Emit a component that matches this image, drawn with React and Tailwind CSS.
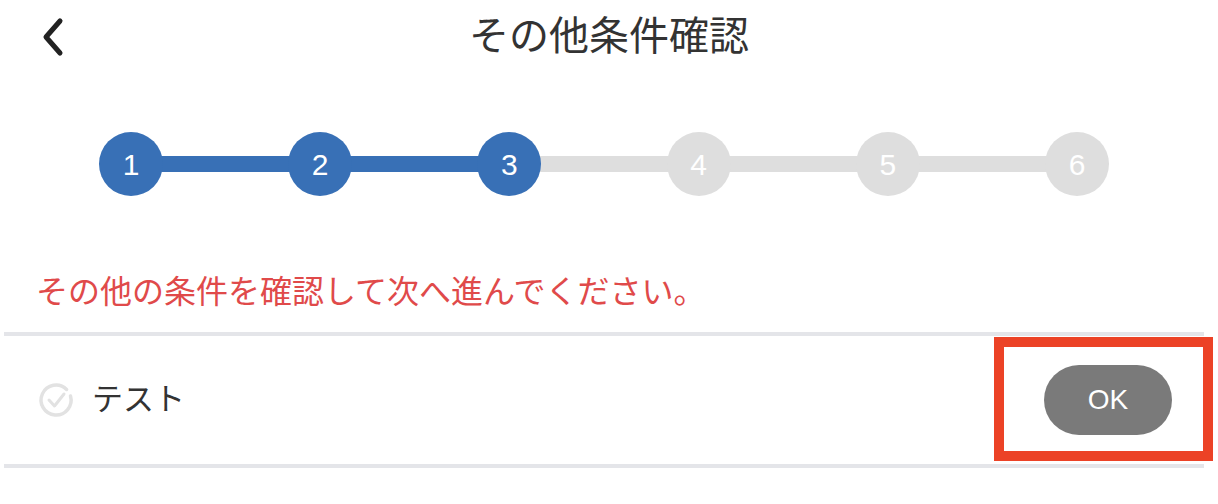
const font = { fontFamily: '"Liberation Sans", "Noto Sans CJK JP", sans-serif' };

const steps = [1, 2, 3, 4, 5, 6];

function Stepper() {
  return (
    <div className="flex items-center pl-[99px] pr-[109px] mt-[60px]">
      {steps.map((n, i) => (
        <div key={n} className={i < 5 ? 'flex flex-1 items-center' : 'flex items-center'}>
          <div className={`relative z-10 flex h-16 w-16 shrink-0 items-center justify-center rounded-full text-[30px] text-white ${n <= 3 ? 'bg-[#3870b6]' : 'bg-[#dedede]'}`}>
            {n}
          </div>
          {i < 5 && <div className={`-mx-1 h-4 flex-1 ${n < 3 ? 'bg-[#3870b6]' : 'bg-[#dedede]'}`} />}
        </div>
      ))}
    </div>
  );
}

export default function App() {
  return (
    <div className="relative h-[504px] w-[1218px] overflow-hidden bg-white" style={font}>
      {/* Header */}
      <div className="relative flex h-[72px] items-center justify-center">
        <svg className="absolute left-[40px] top-[17px]" width="26" height="40" viewBox="0 0 26 40" fill="none" stroke="#222" strokeWidth="5" strokeLinecap="round" strokeLinejoin="round">
          <path d="M20 4 L6 20 L20 36" />
        </svg>
        <h1 className="text-[40px] leading-none text-[#333] font-normal">その他条件確認</h1>
      </div>

      <Stepper />

      <p className="mt-[74px] pl-[36px] text-[32px] leading-[44px] text-[#e04a4a]">その他の条件を確認して次へ進んでください。</p>

      {/* Row */}
      <div className="ml-1 mt-[18px] flex h-[136px] w-[1200px] items-center border-y-4 border-[#e4e5e9] pr-[32px] pl-[35px]">
        <svg className="overflow-visible" width="34" height="34" viewBox="0 0 34 34" fill="none" stroke="#e2e2e2" strokeLinecap="round" strokeLinejoin="round">
          <path d="M27.6 6.4 A15 15 0 1 0 31.5 13" strokeWidth="3.5" />
          <path d="M10 17 L15.5 23 L25 11" strokeWidth="3" />
        </svg>
        <span className="ml-[19px] text-[31px] text-[#333]">テスト</span>
        <button className="ml-auto flex h-[70px] w-32 items-center justify-center rounded-full bg-[#7a7a7a] text-[28px] text-white">OK</button>
      </div>

      {/* Annotation box */}
      <div className="absolute left-[994px] top-[337px] h-[124px] w-[219px] border-10 border-[#ec4226]" />
    </div>
  );
}
